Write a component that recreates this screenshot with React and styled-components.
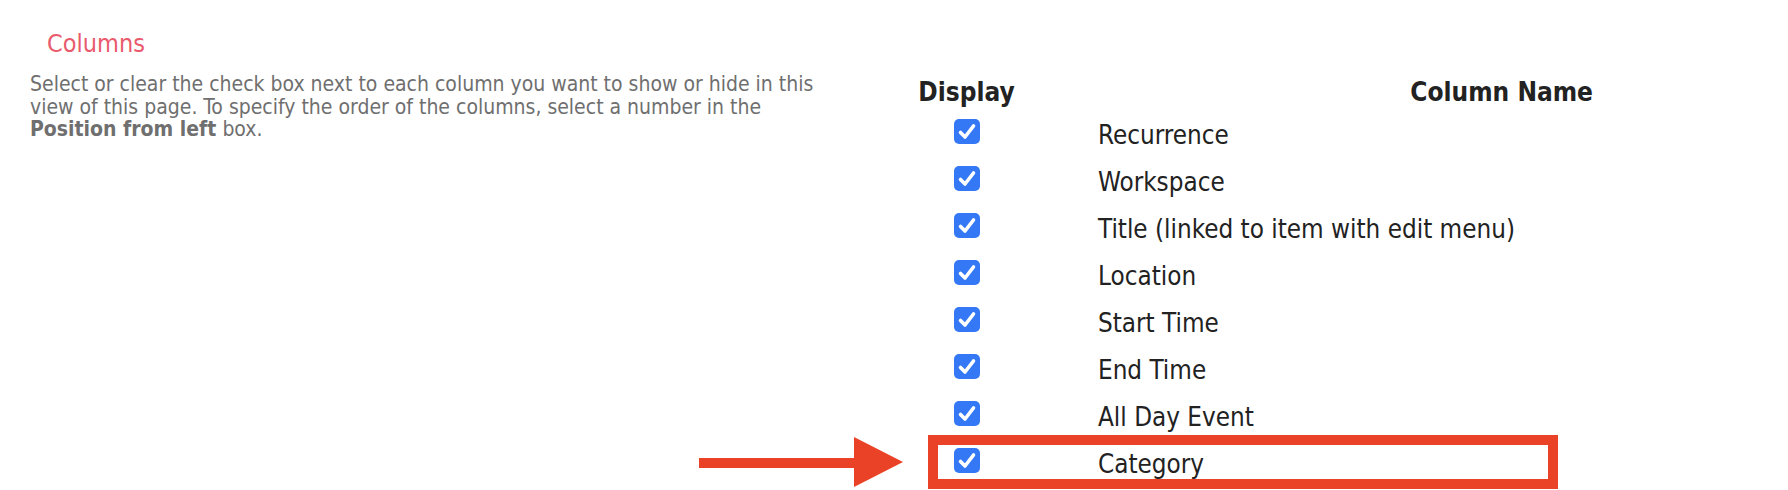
import React from "react";
import styled, { createGlobalStyle } from "styled-components";

const GlobalStyle = createGlobalStyle`
  html, body {
    margin: 0;
    padding: 0;
    background: #ffffff;
  }
  body {
    font-family: "DejaVu Sans Condensed", "DejaVu Sans", sans-serif;
  }
`;

const Page = styled.div`
  display: grid;
  grid-template-columns: 920px auto;
  width: 1788px;
  height: 490px;
  overflow: hidden;
`;

const Intro = styled.section`
  padding: 29px 0 0 30px;
`;

const Title = styled.h2`
  margin: 0 0 14px 17px;
  font-size: 25px;
  line-height: 30px;
  font-weight: normal;
  color: #e95a6d;
`;

const Description = styled.p`
  margin: 0;
  width: 790px;
  font-size: 21px;
  line-height: 22.7px;
  color: #6f6f6f;

  strong {
    font-weight: bold;
  }
`;

const Table = styled.div`
  padding-top: 73px;
  display: grid;
  grid-template-columns: 93px 495px;
  column-gap: 85px;
  align-content: start;
`;

const HeaderCell = styled.div`
  height: 39px;
  font-size: 26px;
  line-height: 39px;
  font-weight: bold;
  color: #222222;
  white-space: nowrap;
  justify-self: ${(p) => (p.$align === "end" ? "end" : "center")};
`;

const Row = styled.div`
  position: relative;
  grid-column: 1 / -1;
  display: grid;
  grid-template-columns: 93px 495px;
  column-gap: 85px;
  height: 47px;
`;

const CheckCell = styled.div`
  display: flex;
  justify-content: center;
  padding-top: 7px;
`;

const Check = styled.span`
  width: 26px;
  height: 25px;
  border-radius: 5px;
  background: #3478f6;
  display: flex;
  align-items: center;
  justify-content: center;
`;

const Name = styled.div`
  font-size: 25.8px;
  line-height: 47px;
  color: #222222;
  white-space: nowrap;
`;

const Highlight = styled.div`
  position: absolute;
  left: 8px;
  top: -6px;
  width: 630px;
  height: 54px;
  box-sizing: border-box;
  border: 10px solid #e94227;
  pointer-events: none;
`;

const Arrow = styled.svg`
  position: absolute;
  left: -221px;
  top: -4px;
  width: 204px;
  height: 50px;
`;

const columns = [
  "Recurrence",
  "Workspace",
  "Title (linked to item with edit menu)",
  "Location",
  "Start Time",
  "End Time",
  "All Day Event",
  "Category",
];

const CheckMark = () => (
  <svg width="26" height="25" viewBox="0 0 26 25">
    <path
      d="M6.5 13.5 L11 18 L19.5 7"
      fill="none"
      stroke="#ffffff"
      strokeWidth="3.6"
      strokeLinecap="round"
      strokeLinejoin="round"
    />
  </svg>
);

const ColumnRow = ({ name, highlighted }) => (
  <Row>
    <CheckCell>
      <Check>
        <CheckMark />
      </Check>
    </CheckCell>
    <Name>{name}</Name>
    {highlighted && (
      <>
        <Highlight />
        <Arrow viewBox="0 0 204 50">
          <rect x="0" y="21" width="160" height="10" fill="#e94227" />
          <polygon points="155,0 204,25 155,50" fill="#e94227" />
        </Arrow>
      </>
    )}
  </Row>
);

export default function App() {
  return (
    <>
      <GlobalStyle />
      <Page>
        <Intro>
          <Title>Columns</Title>
          <Description>
            Select or clear the check box next to each column you want to show
            or hide in this view of this page. To specify the order of the
            columns, select a number in the <strong>Position from left</strong>{" "}
            box.
          </Description>
        </Intro>
        <Table>
          <HeaderCell>Display</HeaderCell>
          <HeaderCell $align="end">Column Name</HeaderCell>
          {columns.map((c) => (
            <ColumnRow key={c} name={c} highlighted={c === "Category"} />
          ))}
        </Table>
      </Page>
    </>
  );
}
